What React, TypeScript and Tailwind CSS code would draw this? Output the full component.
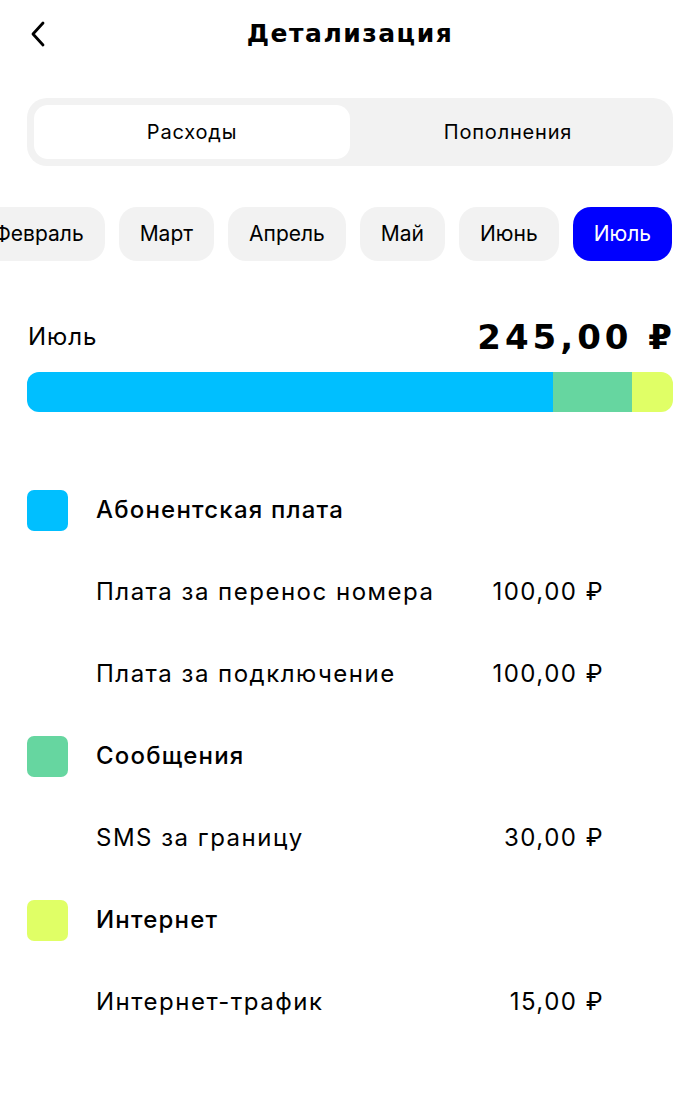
import React from "react";

const months = ["Январь", "Февраль", "Март", "Апрель", "Май", "Июнь", "Июль"];

const groups = [
  {
    title: "Абонентская плата",
    color: "bg-[#00bfff]",
    items: [
      { name: "Плата за перенос номера", sum: "100,00 ₽" },
      { name: "Плата за подключение", sum: "100,00 ₽" },
    ],
  },
  {
    title: "Сообщения",
    color: "bg-[#66d6a0]",
    items: [{ name: "SMS за границу", sum: "30,00 ₽" }],
  },
  {
    title: "Интернет",
    color: "bg-[#e0ff66]",
    items: [{ name: "Интернет-трафик", sum: "15,00 ₽" }],
  },
];

function App() {
  return (
    <div className="w-[700px] min-h-[1115px] bg-white text-black font-['Inter',sans-serif]">
      {/* Header */}
      <div className="grid grid-cols-[80px_1fr_80px] items-center h-[68px]">
        <div className="pl-[28px] flex items-center">
          <svg width="20" height="28" viewBox="0 0 20 28" fill="none">
            <path d="M15 3L5 14l10 11" stroke="#000" strokeWidth="2.8" strokeLinecap="round" strokeLinejoin="round" />
          </svg>
        </div>
        <h1 className="text-center text-[25px] font-bold font-['DejaVu_Sans',sans-serif] tracking-[1.5px]">
          Детализация
        </h1>
        <div />
      </div>

      {/* Tabs */}
      <div className="mx-[27px] mt-[30px] h-[68px] rounded-[20px] bg-[#f2f2f2] p-[7px] flex">
        <div className="flex-1 rounded-[14px] bg-white flex items-center justify-center text-[20px] tracking-[0.8px]">
          Расходы
        </div>
        <div className="flex-1 flex items-center justify-center text-[20px] tracking-[0.8px]">Пополнения</div>
      </div>

      {/* Months */}
      <div className="mt-[41px] h-[54px] flex justify-end gap-[14px] overflow-hidden pr-[28px]">
        {months.map((m) => (
          <div
            key={m}
            className={
              m === "Июль"
                ? "shrink-0 h-[54px] px-[21px] rounded-[18px] bg-[#0000ff] text-white flex items-center text-[21px]"
                : "shrink-0 h-[54px] px-[21px] rounded-[18px] bg-[#f2f2f2] flex items-center text-[21px]"
            }
          >
            {m}
          </div>
        ))}
      </div>

      {/* Summary */}
      <div className="mt-[56px] mx-[28px] flex items-center justify-between h-[40px]">
        <span className="text-[24px] tracking-[1px]">Июль</span>
        <span className="text-[34px] font-bold font-['DejaVu_Sans',sans-serif] tracking-[4px] -mr-[4px]">
          245,00 ₽
        </span>
      </div>
      <div className="mt-[15px] mx-[27px] h-[40px] rounded-[12px] overflow-hidden flex">
        <div className="w-[526px] bg-[#00bfff]" />
        <div className="w-[79px] bg-[#66d6a0]" />
        <div className="flex-1 bg-[#e0ff66]" />
      </div>

      {/* Details */}
      <div className="mt-[57px]">
        {groups.map((g) => (
          <div key={g.title}>
            <div className="h-[82px] flex items-center px-[27px]">
              <div className={`w-[41px] h-[41px] rounded-[7px] ${g.color}`} />
              <span className="ml-[28px] text-[24px] font-medium tracking-[1.2px]">{g.title}</span>
            </div>
            {g.items.map((it) => (
              <div
                key={it.name}
                className="h-[82px] flex items-center justify-between pl-[96px] pr-[96px] text-[24px] tracking-[1.5px]"
              >
                <span>{it.name}</span>
                <span>{it.sum}</span>
              </div>
            ))}
          </div>
        ))}
      </div>
    </div>
  );
}

export default App;
